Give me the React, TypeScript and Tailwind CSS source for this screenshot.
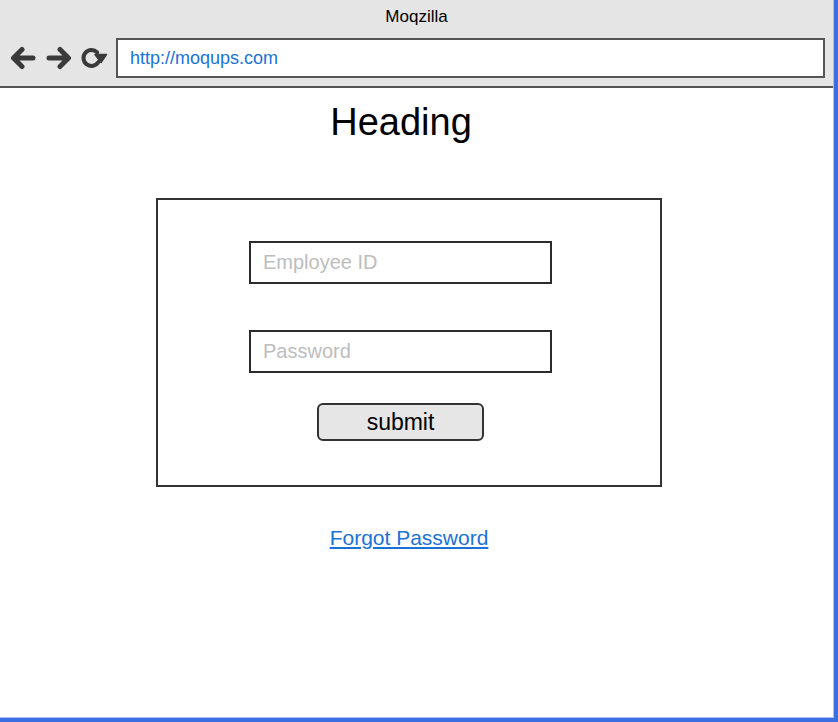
const font = { fontFamily: '"Liberation Sans", Arial, sans-serif' };

function BackIcon() {
  return (
    <svg width="28" height="24" viewBox="0 0 28 24" className="shrink-0">
      <path
        d="M24 12 H5 M13 3.5 L4.5 12 L13 20.5"
        fill="none"
        stroke="#3a3a3a"
        strokeWidth="5"
        strokeLinecap="round"
        strokeLinejoin="round"
      />
    </svg>
  );
}

function ForwardIcon() {
  return (
    <svg width="28" height="24" viewBox="0 0 28 24" className="shrink-0">
      <path
        d="M4 12 H23 M15 3.5 L23.5 12 L15 20.5"
        fill="none"
        stroke="#3a3a3a"
        strokeWidth="5"
        strokeLinecap="round"
        strokeLinejoin="round"
      />
    </svg>
  );
}

function ReloadIcon() {
  return (
    <svg width="27" height="24" viewBox="0 0 27 24" className="shrink-0">
      <path
        d="M16.2 6.3 A8 8 0 1 0 17.4 16"
        fill="none"
        stroke="#3a3a3a"
        strokeWidth="4"
        strokeLinecap="round"
      />
      <path
        d="M14 8.5 L25.5 8.5 L20 16.5 Z"
        fill="#3a3a3a"
        stroke="#3a3a3a"
        strokeWidth="1.5"
        strokeLinejoin="round"
      />
    </svg>
  );
}

function Field({ placeholder }: { placeholder: string }) {
  return (
    <input
      placeholder={placeholder}
      style={font}
      className="w-[303px] h-[43px] border-2 border-[#2b2b2b] bg-white px-3 text-[20px] text-black placeholder:text-[#bdbdbd] outline-none"
    />
  );
}

export default function App() {
  return (
    <div
      style={font}
      className="w-[838px] h-[722px] bg-white border-r-4 border-b-4 border-[#3b6ee0] overflow-hidden"
    >
      <div className="h-full flex flex-col border-r border-b border-[#a9bff0]">
        <div className="h-[88px] bg-[#e5e5e5] border-b-2 border-[#555555] flex flex-col">
          <div className="h-[33px] flex items-center justify-center text-[17px] text-black pt-[1px]">
            Moqzilla
          </div>
          <div className="flex items-center pl-[9px] pr-[8px] pt-[5px]">
            <div className="flex items-center gap-[8px]">
              <BackIcon />
              <ForwardIcon />
              <ReloadIcon />
            </div>
            <div className="ml-[8px] flex-1 h-[40px] bg-white border-2 border-[#555555] flex items-center pl-[12px] pt-[1px] text-[18px] text-[#1a72d8]">
              http://moqups.com
            </div>
          </div>
        </div>

        <div className="flex flex-col items-start pl-[156px]">
          <h1 className="mt-[15px] w-[490px] text-center text-[38px] leading-none text-black">
            Heading
          </h1>

          <div className="mt-[57px] w-[506px] h-[289px] border-2 border-[#333333] pl-[91px] pt-[41px] flex flex-col items-start">
            <Field placeholder="Employee ID" />
            <div className="mt-[46px]">
              <Field placeholder="Password" />
            </div>
            <button
              style={font}
              className="mt-[30px] ml-[68px] w-[167px] h-[38px] rounded-[6px] bg-[#e6e6e6] border-2 border-[#333333] text-[23px] text-black flex items-center justify-center"
            >
              submit
            </button>
          </div>

          <div className="mt-[40px] w-[506px] flex justify-center">
            <a href="#" className="text-[21px] leading-none text-[#1a72d8] underline underline-offset-2">
              Forgot Password
            </a>
          </div>
        </div>
      </div>
    </div>
  );
}
